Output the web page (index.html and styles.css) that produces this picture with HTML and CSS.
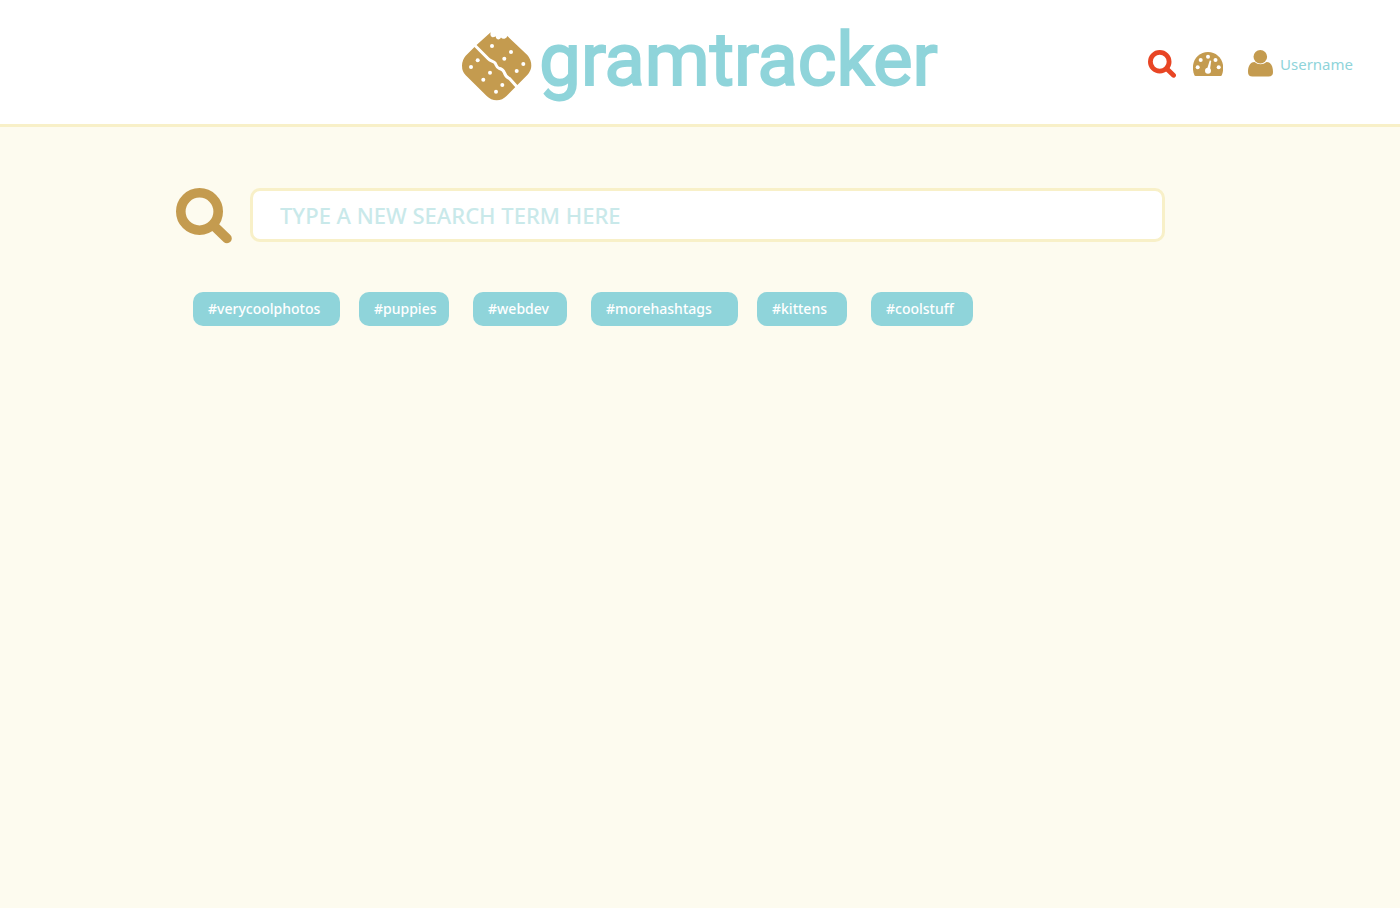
FILE: index.html
```html
<!DOCTYPE html>
<html lang="en">
<head>
<meta charset="utf-8">
<meta name="viewport" content="width=device-width, initial-scale=1">
<title>gramtracker</title>
<link rel="stylesheet" href="styles.css">
</head>
<body>
<header class="site-header">
  <a class="brand" href="#">
    <svg class="brand-mark" viewBox="0 0 70 69" aria-hidden="true">
      <path class="fill" d="M14 13.500 28.700.3Q27.600 4.600 30.400 5.200 32.400 5.300 33.600 4.200 34.200 7.400 36.600 7.400 38.400 7.200 39 5.500 40.200 7.200 42.500 6.700 44.800 6.200 45.300 4L65.300 23Q69.300 27.500 69.300 33.700 69.300 38.500 65.300 43L44.500 64Q40.500 68.200 34.700 68.200 28.800 68.200 24.700 64L3.700 43.300Q0 39.500 0 33.700 0 28.300 3.700 23.800Z"/>
      <path class="crack" d="M11 11.500 26.200 26.800C28.500 29.300 31.500 29 33.200 31.200 34.600 33.400 34.500 35.500 37 36.300 39.500 37 41.400 38 42.300 40.500 43.300 44 44.500 45.200 47.500 46.600L56 56"/>
      <g class="crumbs">
        <circle cx="30" cy="14" r="2"/><circle cx="49" cy="20" r="2"/><circle cx="42.300" cy="26.700" r="2"/>
        <circle cx="61.300" cy="32" r="2"/><circle cx="54.700" cy="39" r="2"/><circle cx="15.700" cy="28.300" r="2"/>
        <circle cx="9" cy="35" r="2"/><circle cx="28" cy="40.700" r="2"/><circle cx="21.300" cy="47.700" r="2"/>
        <circle cx="40.300" cy="53" r="2"/><circle cx="34" cy="59.700" r="2"/>
      </g>
    </svg>
    <span class="wordmark">gramtracker</span>
  </a>
  <nav class="site-nav" aria-label="Main">
    <a class="nav-search" href="#" aria-label="Search">
      <svg viewBox="0 0 56 56" width="28" height="28" aria-hidden="true"><circle class="lens" cx="23.500" cy="23.500" r="18.700"/><path class="handle" d="M37 37 51 50.500"/></svg>
    </a>
    <a class="nav-dash" href="#" aria-label="Dashboard">
      <svg viewBox="0 0 30 24" width="30" height="24" aria-hidden="true">
        <path class="fill" d="M2.600 24Q1.800 24 1.400 23.200C-3.600 10.500 4.500 0 15 0S33.600 10.500 28.800 23.200Q28.400 24 27.600 24Z"/>
        <g class="crumbs"><circle cx="4.700" cy="15.300" r="2"/><circle cx="7.700" cy="8" r="2"/><circle cx="15" cy="4.700" r="2"/><circle cx="22.500" cy="8" r="2"/><circle cx="25.700" cy="15.300" r="2"/><circle cx="15" cy="18.700" r="3"/><path d="M13.800 18 16.700 8.600Q17.600 8 18.200 9L16.800 18.500Z"/></g>
      </svg>
    </a>
    <a class="nav-user" href="#">
      <svg viewBox="0 0 25 28" width="25" height="28" aria-hidden="true">
        <path class="fill" d="M6.500 12Q9 14.300 12.500 14.300T18.500 12C23 12 25 16.500 25 22Q25 26.500 20.500 26.500H4.500Q0 26.500 0 22C0 16.500 2 12 6.500 12Z"/>
        <circle class="fill" cx="12.300" cy="6.800" r="6.800"/>
      </svg>
      <span>Username</span>
    </a>
  </nav>
</header>
<main class="content">
  <form class="search" role="search">
    <label for="term" aria-label="Search term">
      <svg class="search-icon" viewBox="0 0 56 56" width="56" height="56" aria-hidden="true"><circle class="lens" cx="23.500" cy="23.500" r="18.700"/><path class="handle" d="M37 37 51 50.500"/></svg>
    </label>
    <input id="term" class="search-field" type="search" placeholder="TYPE A NEW SEARCH TERM HERE">
  </form>
  <div class="tags">
    <button class="tag tag-long" type="button">#verycoolphotos</button>
    <button class="tag tag-short" type="button">#puppies</button>
    <button class="tag" type="button">#webdev</button>
    <button class="tag tag-long" type="button">#morehashtags</button>
    <button class="tag tag-short" type="button">#kittens</button>
    <button class="tag tag-medium" type="button">#coolstuff</button>
  </div>
</main>
</body>
</html>
```
FILE: styles.css
```css
:root {
  --teal: #8fd4da;
  --tan: #c49b4f;
  --line: #f8f0c8;
}
* { box-sizing: border-box; }
body {
  margin: 0;
  min-height: 100vh;
  background: #fdfbef;
  color: var(--teal);
  font-family: "Noto Sans", sans-serif;
  font-size: 15px;
}
a { color: inherit; text-decoration: none; }
svg { display: block; flex: none; }
.fill { fill: var(--tan); }
.crumbs { fill: #fff; }
.crack { fill: none; stroke: #fff; stroke-width: 3; }
.lens { fill: none; stroke: currentColor; stroke-width: 9.6; }
.handle { fill: none; stroke: currentColor; stroke-width: 9.6; stroke-linecap: round; }

.site-header {
  display: grid;
  grid-template-columns: 1fr auto 1fr;
  align-items: center;
  min-height: 127px;
  padding: 0 47px;
  background: #fff;
  border-bottom: 3px solid var(--line);
}
.brand {
  grid-column: 2;
  display: flex;
  align-items: center;
  gap: 7px;
  padding-top: 8px;
}
.brand-mark { width: 70px; height: 69px; }
.wordmark {
  padding-bottom: 12px;
  font-family: Roboto, sans-serif;
  font-size: 74px;
  line-height: 80px;
  -webkit-text-stroke: 2px var(--teal);
}
.site-nav {
  display: flex;
  justify-content: flex-end;
  align-items: center;
  padding-top: 4px;
}
.nav-search { color: #e84524; margin-right: 17px; }
.nav-dash { margin-right: 25px; }
.nav-user { display: flex; align-items: center; gap: 7px; }

.content { padding: 61px 235px 40px 176px; }
.search { display: flex; align-items: flex-start; gap: 18px; color: var(--tan); }
.search-field {
  flex: 1;
  min-width: 0;
  height: 54px;
  padding: 0 27px;
  border: 3px solid var(--line);
  border-radius: 10px;
  background: #fff;
  color: var(--teal);
  font: 500 22px "Noto Sans", sans-serif;
  appearance: none;
}
.search-field::placeholder { color: #c9e9ea; opacity: 1; }
.tags { display: flex; flex-wrap: wrap; row-gap: 16px; padding: 48px 0 0 17px; }
.tag {
  width: 94px;
  height: 34px;
  margin: 0 24px 0 0;
  padding: 0 0 1px 15px;
  border: 0;
  border-radius: 10px;
  background: var(--teal);
  color: #fff;
  font: 500 14px "Noto Sans", sans-serif;
  text-align: left;
  white-space: nowrap;
}
.tag-short { width: 90px; }
.tag-medium { width: 102px; }
.tag-long { width: 147px; margin-right: 19px; }
```
